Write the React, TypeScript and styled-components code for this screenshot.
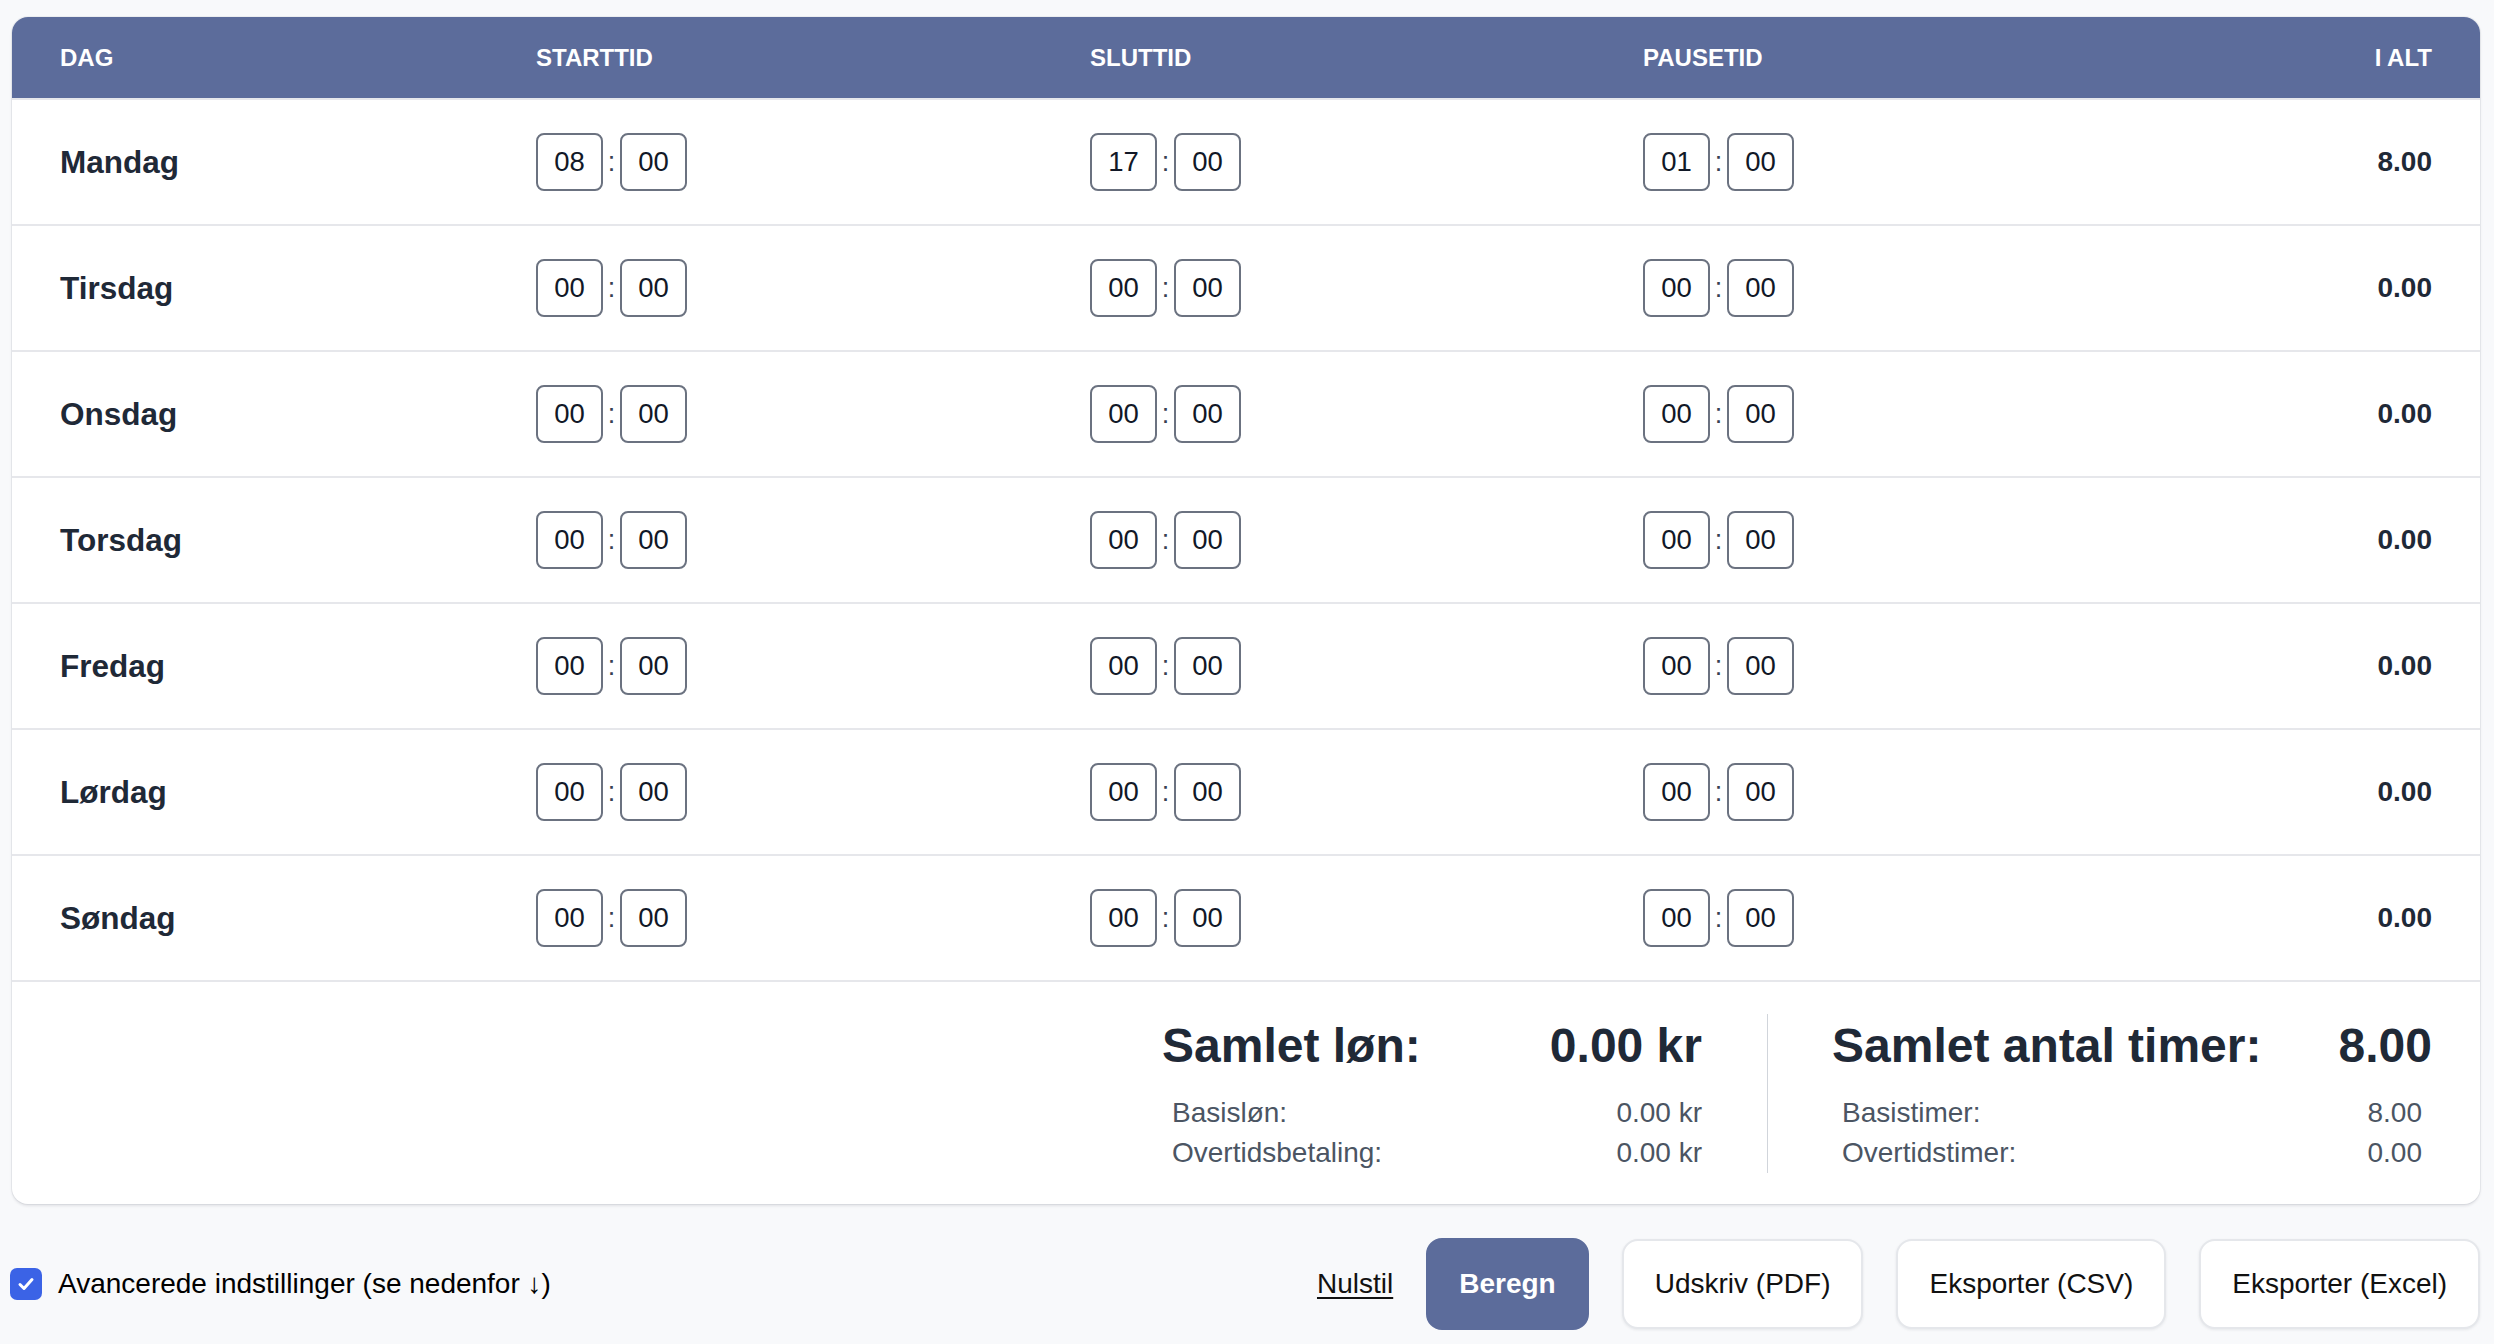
import React from "react";
import styled, { createGlobalStyle } from "styled-components";

const HEADER_BG = "#5c6c9b";
const LINE = "#e6e7eb";
const TEXT_DARK = "#1f2937";

const GlobalStyle = createGlobalStyle`
  body {
    margin: 0;
    background: #f8f9fb;
    font-family: "Liberation Sans", Arial, Helvetica, sans-serif;
    color: ${TEXT_DARK};
  }
`;

const Page = styled.div`
  display: flex;
  flex-direction: column;
  padding-top: 17px;
`;

const Card = styled.div`
  margin: 0 14px 0 12px;
  background: #fff;
  border-radius: 16px;
  overflow: hidden;
  box-shadow: 0 2px 3px rgba(15, 23, 42, 0.1), 0 0 0 1px #eceef1;
`;

const Grid = styled.div`
  display: grid;
  grid-template-columns: 476px 554px 553px 553px 1fr;
`;

const HeadRow = styled.div`
  display: contents;
`;

const HeadCell = styled.div<{ $right?: boolean }>`
  height: 81px;
  border-bottom: 2px solid ${LINE};
  background: ${HEADER_BG};
  color: #fff;
  font-size: 24px;
  font-weight: 700;
  text-transform: uppercase;
  display: flex;
  align-items: center;
  justify-content: ${(p) => (p.$right ? "flex-end" : "flex-start")};
  padding: 0 48px;
`;

const Cell = styled.div<{ $right?: boolean }>`
  height: 124px;
  border-bottom: 2px solid ${LINE};
  display: flex;
  align-items: center;
  justify-content: ${(p) => (p.$right ? "flex-end" : "flex-start")};
  padding: 0 48px;
`;

const DayName = styled.span`
  font-size: 31.5px;
  font-weight: 700;
  color: ${TEXT_DARK};
`;

const Total = styled.span`
  font-size: 28px;
  font-weight: 700;
  color: ${TEXT_DARK};
`;

const TimeGroup = styled.div`
  display: flex;
  align-items: center;
`;

const TimeBox = styled.input`
  box-sizing: border-box;
  width: 67px;
  height: 58px;
  border: 2px solid #6b7280;
  border-radius: 8px;
  background: #fff;
  text-align: center;
  font-family: inherit;
  font-size: 27.5px;
  color: #111827;
  padding: 0;
  outline: none;
`;

const Colon = styled.span`
  width: 17px;
  text-align: center;
  font-size: 27px;
  color: #374151;
`;

const Summary = styled.div`
  display: flex;
  justify-content: flex-end;
  padding: 32px 48px 31px;
`;

const SumBlock = styled.div<{ $w: number; $side: "left" | "right" }>`
  width: ${(p) => p.$w}px;
  ${(p) =>
    p.$side === "left"
      ? `padding-right: 65px; border-right: 1px solid #d1d5db;`
      : `padding-left: 64px;`}
`;

const SumTitle = styled.div`
  display: flex;
  justify-content: space-between;
  font-size: 48px;
  font-weight: 700;
  line-height: 64px;
  color: ${TEXT_DARK};
`;

const SubList = styled.div<{ $inset: number }>`
  margin-top: 15px;
  padding: 0 ${(p) => p.$inset}px 0 10px;
`;

const SubRow = styled.div`
  display: flex;
  justify-content: space-between;
  font-size: 28px;
  line-height: 40px;
  color: #4b5563;
`;

const Bar = styled.div`
  display: flex;
  align-items: center;
  justify-content: space-between;
  padding: 34px 14px 20px 10px;
`;

const CheckLabel = styled.label`
  display: flex;
  align-items: center;
  gap: 16px;
  font-size: 28px;
  color: #000;
`;

const CheckBox = styled.span`
  width: 32px;
  height: 32px;
  border-radius: 7px;
  background: #3b63e6;
  display: flex;
  align-items: center;
  justify-content: center;
`;

const Actions = styled.div`
  display: flex;
  align-items: center;
  gap: 33px;
`;

const LinkButton = styled.button`
  border: none;
  background: none;
  padding: 0;
  font-family: inherit;
  font-size: 28px;
  color: #111;
  text-decoration: underline;
  text-underline-offset: 4px;
`;

const Button = styled.button<{ $primary?: boolean }>`
  box-sizing: border-box;
  height: ${(p) => (p.$primary ? 92 : 90)}px;
  padding: 0 31px;
  border-radius: 16px;
  font-family: inherit;
  font-size: 28px;
  font-weight: ${(p) => (p.$primary ? 700 : 400)};
  color: ${(p) => (p.$primary ? "#fff" : "#111")};
  background: ${(p) => (p.$primary ? HEADER_BG : "#fff")};
  border: 2px solid ${(p) => (p.$primary ? HEADER_BG : "#e5e7eb")};
  box-shadow: ${(p) => (p.$primary ? "none" : "0 1px 3px rgba(15,23,42,0.08)")};
`;

type Day = { name: string; start: [string, string]; end: [string, string]; pause: [string, string]; total: string };

const zero: [string, string] = ["00", "00"];

const days: Day[] = [
  { name: "Mandag", start: ["08", "00"], end: ["17", "00"], pause: ["01", "00"], total: "8.00" },
  { name: "Tirsdag", start: zero, end: zero, pause: zero, total: "0.00" },
  { name: "Onsdag", start: zero, end: zero, pause: zero, total: "0.00" },
  { name: "Torsdag", start: zero, end: zero, pause: zero, total: "0.00" },
  { name: "Fredag", start: zero, end: zero, pause: zero, total: "0.00" },
  { name: "Lørdag", start: zero, end: zero, pause: zero, total: "0.00" },
  { name: "Søndag", start: zero, end: zero, pause: zero, total: "0.00" },
];

const Time = ({ value }: { value: [string, string] }) => (
  <TimeGroup>
    <TimeBox defaultValue={value[0]} />
    <Colon>:</Colon>
    <TimeBox defaultValue={value[1]} />
  </TimeGroup>
);

export default function App() {
  return (
    <Page>
      <GlobalStyle />
      <Card>
        <Grid>
          <HeadRow>
            <HeadCell>Dag</HeadCell>
            <HeadCell>Starttid</HeadCell>
            <HeadCell>Sluttid</HeadCell>
            <HeadCell>Pausetid</HeadCell>
            <HeadCell $right>I alt</HeadCell>
          </HeadRow>
          {days.map((d) => (
            <React.Fragment key={d.name}>
              <Cell>
                <DayName>{d.name}</DayName>
              </Cell>
              <Cell>
                <Time value={d.start} />
              </Cell>
              <Cell>
                <Time value={d.end} />
              </Cell>
              <Cell>
                <Time value={d.pause} />
              </Cell>
              <Cell $right>
                <Total>{d.total}</Total>
              </Cell>
            </React.Fragment>
          ))}
        </Grid>
        <Summary>
          <SumBlock $w={540} $side="left">
            <SumTitle>
              <span>Samlet løn:</span>
              <span>0.00 kr</span>
            </SumTitle>
            <SubList $inset={0}>
              <SubRow>
                <span>Basisløn:</span>
                <span>0.00 kr</span>
              </SubRow>
              <SubRow>
                <span>Overtidsbetaling:</span>
                <span>0.00 kr</span>
              </SubRow>
            </SubList>
          </SumBlock>
          <SumBlock $w={600} $side="right">
            <SumTitle>
              <span>Samlet antal timer:</span>
              <span>8.00</span>
            </SumTitle>
            <SubList $inset={10}>
              <SubRow>
                <span>Basistimer:</span>
                <span>8.00</span>
              </SubRow>
              <SubRow>
                <span>Overtidstimer:</span>
                <span>0.00</span>
              </SubRow>
            </SubList>
          </SumBlock>
        </Summary>
      </Card>
      <Bar>
        <CheckLabel>
          <CheckBox>
            <svg width="20" height="20" viewBox="0 0 20 20" fill="none">
              <path d="M4 10.5l4 4 8-9" stroke="#fff" strokeWidth="3" strokeLinecap="round" strokeLinejoin="round" />
            </svg>
          </CheckBox>
          Avancerede indstillinger (se nedenfor ↓)
        </CheckLabel>
        <Actions>
          <LinkButton>Nulstil</LinkButton>
          <Button $primary>Beregn</Button>
          <Button>Udskriv (PDF)</Button>
          <Button>Eksporter (CSV)</Button>
          <Button>Eksporter (Excel)</Button>
        </Actions>
      </Bar>
    </Page>
  );
}
